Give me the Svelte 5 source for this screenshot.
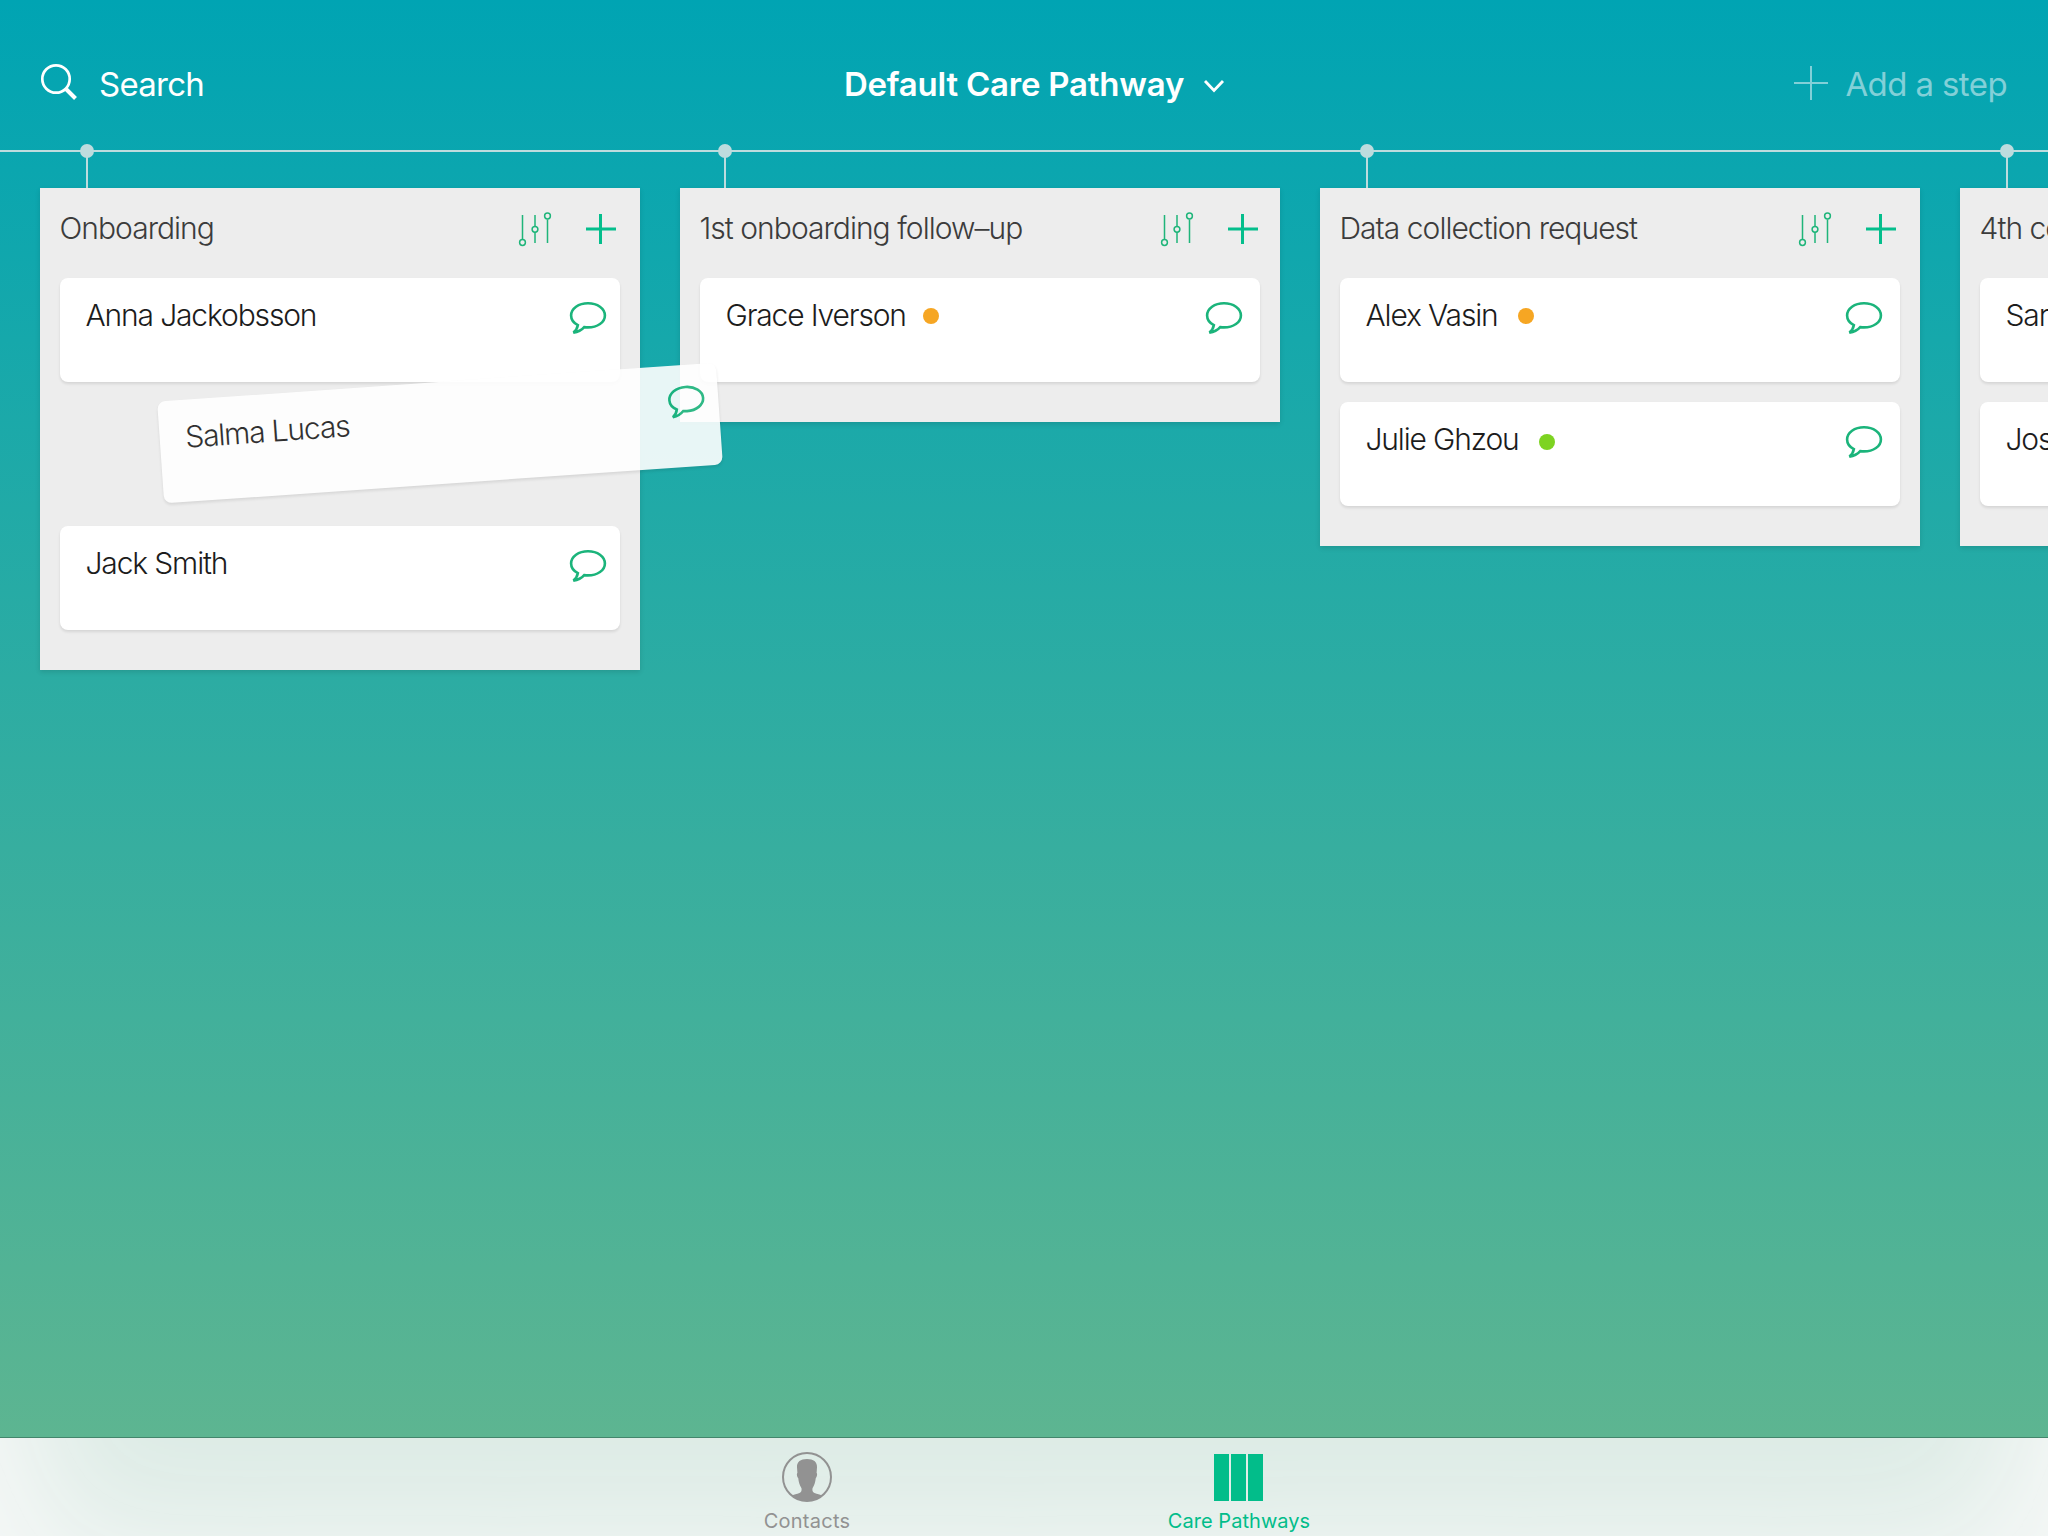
<script>
  const columns = [
    { title: 'Onboarding', stem: 47, kind: 'first', cards: [
      { name: 'Anna Jackobsson' },
      { drag: true },
      { name: 'Jack Smith' },
    ] },
    { title: '1st onboarding follow–up', stem: 45, kind: 'second', cards: [
      { name: 'Grace Iverson', dot: 'orange' },
    ] },
    { title: 'Data collection request', stem: 47, kind: 'third', cards: [
      { name: 'Alex Vasin', dot: 'orange' },
      { name: 'Julie Ghzou', dot: 'green' },
    ] },
    { title: '4th connect', stem: 47, kind: 'third', cards: [
      { name: 'Sarah' },
      { name: 'Joseph' },
    ] },
  ];
</script>

{#snippet bubble()}
  <svg class="bubble" viewBox="0 0 38 34" width="38" height="34">
    <path d="M19 2.200c9.400 0 16.900 5.300 16.900 12.200S28.400 26.400 19 26.400c-1.300 0-2.600-.1-3.800-.3C13 28.600 9.500 30.900 4.400 31.600c2.600-1.900 3.900-4.300 4.500-7.500C4.800 22 2.100 18.500 2.100 14.400 2.100 7.500 9.600 2.200 19 2.200Z" />
  </svg>
{/snippet}

<div class="screen">
  <header>
    <div class="search">
      <svg width="40" height="40" viewBox="0 0 40 40"><circle cx="16" cy="17" r="13.700" /><path class="handle" d="M25.500 26.500 35.500 36.500" /></svg>
      <span>Search</span>
    </div>
    <div class="pathway">
      <h1>Default Care Pathway</h1>
      <svg width="22" height="16" viewBox="0 0 22 16"><path d="M2 3l9 9.500L20 3" /></svg>
    </div>
    <div class="add">
      <svg width="36" height="36" viewBox="0 0 36 36"><path d="M18 1v34M1 18h34" /></svg>
      <span>Add a step</span>
    </div>
  </header>
  <div class="rail"></div>

  <main>
    {#each columns as col}
      <section class={col.kind}>
        <i class="stem" style:left="{col.stem}px"></i>
        <div class="head">
          <h2>{col.title}</h2>
          <svg class="sliders" width="34" height="36" viewBox="0 0 34 36">
            <path d="M4.500 3v25M17 3v11M17 20v11M29.500 7.500v23.500" />
            <circle cx="4.500" cy="30.500" r="2.900" /><circle cx="17" cy="17.300" r="2.900" /><circle cx="29.500" cy="4" r="2.900" />
          </svg>
          <svg class="plus" width="30" height="30" viewBox="0 0 30 30"><path d="M14.500 0v30M0 15h30" /></svg>
        </div>
        <div class="stack">
          {#each col.cards as card}
            {#if card.drag}
              <div class="slot">
                <article class="card dragged"><span>Salma Lucas</span>{@render bubble()}</article>
              </div>
            {:else}
              <article class="card">
                <span>{card.name}</span>
                {#if card.dot}<b class={card.dot}></b>{/if}
                {@render bubble()}
              </article>
            {/if}
          {/each}
        </div>
      </section>
    {/each}
  </main>

  <nav>
    <div class="tab">
      <svg width="50" height="50" viewBox="0 0 50 50">
        <circle cx="25" cy="25" r="24" />
        <path d="M25 7c-6.500 0-10.200 2.800-10 8.300l.4 5.800c-.9.300-.5 3.800.8 5 .5 4.300 1.500 7.400 3.300 10.200 .4 2.700-.2 3.900-2 4.700-2.800 1.200-5.400 1.500-7.300 2.400C14.300 47.300 19.300 49 25 49s10.700-1.700 14.800-5.600c-1.900-.9-4.500-1.200-7.300-2.400-1.800-.8-2.400-2-2-4.700 1.800-2.800 2.800-5.900 3.300-10.200 1.300-1.200 1.700-4.700.8-5l.4-5.800C35.200 9.800 31.500 7 25 7Z" />
      </svg>
      <span>Contacts</span>
    </div>
    <div class="tab active">
      <div class="bars"><i></i><i></i><i></i></div>
      <span>Care Pathways</span>
    </div>
  </nav>
</div>

<style>
  :global(body) { margin: 0; overflow: hidden; }
  .screen {
    width: 2048px; height: 1536px; overflow: hidden;
    display: flex; flex-direction: column;
    font-family: Inter, 'Liberation Sans', sans-serif;
    background: linear-gradient(#00a4b3 0, #5db591 1438px);
  }
  header {
    height: 150px; flex: none; box-sizing: border-box; padding: 18px 40px 0;
    display: grid; grid-template-columns: 1fr auto 1fr; align-items: center;
    color: #fff; font-size: 33px;
  }
  svg { fill: none; flex: none; display: block; }
  .search { display: flex; align-items: center; gap: 19px; }
  .search svg { stroke: #fff; stroke-width: 2.700; margin-top: -4px; }
  .search .handle { stroke-width: 4; }
  .search span { letter-spacing: -0.750px; }
  .pathway { display: flex; align-items: center; gap: 19px; margin-left: 21px; }
  h1 { margin: 0; font-size: 33px; font-weight: 600; letter-spacing: -0.220px; white-space: nowrap; }
  .pathway svg { stroke: #fff; stroke-width: 2.800; margin-top: 3px; }
  .add { display: flex; align-items: center; justify-content: flex-end; gap: 16px; margin-right: 1px; color: #82d0d8; letter-spacing: -0.600px; white-space: nowrap; }
  .add svg { stroke: #82d0d8; stroke-width: 2; margin-top: -2px; }
  .rail { height: 2px; flex: none; background: #bddcde; }
  main {
    flex: 1; min-height: 0; padding: 36px 0 0 40px; box-sizing: border-box;
    display: flex; align-items: flex-start; gap: 40px;
  }
  section {
    position: relative; width: 600px; flex: none; box-sizing: border-box; padding: 0 20px 40px;
    background: #ededed; box-shadow: 0 2px 5px rgba(0, 0, 0, .12);
  }
  section.first { z-index: 1; }
  .stem { position: absolute; top: -38px; width: 2px; height: 38px; margin-left: -1px; background: #bddcde; }
  .stem::before {
    content: ''; position: absolute; left: -6px; top: -6px; width: 14px; height: 14px;
    border-radius: 50%; background: #bddcde;
  }
  .head { height: 90px; display: flex; align-items: center; }
  h2 {
    margin: -11px auto 0 -0.500px; font-size: 30px; font-weight: 300; color: #3c3c3c;
    letter-spacing: -0.970px; white-space: nowrap;
  }
  .sliders { stroke: #1fb57a; stroke-width: 1.500; margin-top: -7px; }
  .plus { stroke: #04be8c; stroke-width: 3; margin: -8px 4px 0 34px; }
  .second .plus { margin-right: 2px; }
  .stack { display: flex; flex-direction: column; gap: 20px; }
  .card {
    height: 104px; box-sizing: border-box; padding: 17px 13px 0 25.500px; border-radius: 8px;
    display: flex; align-items: flex-start; background: #fff;
    box-shadow: 0 2px 3px rgba(0, 0, 0, .1);
    font-size: 30px; line-height: 41px; font-weight: 300; color: #1c1c1c; letter-spacing: -1.150px;
    white-space: nowrap;
  }
  .second .card { padding-right: 17px; }
  .third .card { padding-right: 17px; }
  .slot { height: 104px; position: relative; z-index: 5; }
  .dragged {
    position: absolute; left: 100px; top: -20px; width: 560px; height: 102px;
    transform: rotate(-4deg); opacity: .9;
  }
  .bubble { stroke: #1bb47b; stroke-width: 2.600; margin: 6px 0 0 auto; }
  .dragged .bubble { margin-top: 3px; }
  b { width: 16px; height: 16px; border-radius: 50%; margin: 13px 0 0 17px; }
  .third b { margin-left: 20px; }
  .orange { background: #f6a623; }
  .green { background: #7dd321; margin-top: 15px; }
  nav {
    height: 99px; flex: none; box-sizing: border-box; border-top: 1px solid #43866c;
    display: flex; justify-content: center; padding-right: 2px;
    position: relative; z-index: 0; overflow: hidden; background: #dcebe5;
  }
  /* frosted glow that fades in from the sides and the bottom */
  nav::before {
    content: ''; position: absolute; z-index: -1; inset: -250px 0 -35px;
    box-shadow: inset 0 0 140px 28px #fafafa;
  }
  .tab {
    width: 432px; display: flex; flex-direction: column; align-items: center;
    color: #929292; font-size: 20px; line-height: 24px; padding-top: 14px; box-sizing: border-box;
  }
  .tab svg { stroke: #929292; stroke-width: 2; }
  .tab path { fill: #929292; stroke: none; }
  .tab span { margin-top: 7px; letter-spacing: .250px; }
  .tab.active span { letter-spacing: .050px; }
  .active { color: #02bd8a; }
  .bars { display: flex; gap: 2px; padding: 2px 1px 1px 0; }
  .bars i { width: 15px; height: 47px; background: #02bd8a; }
</style>
